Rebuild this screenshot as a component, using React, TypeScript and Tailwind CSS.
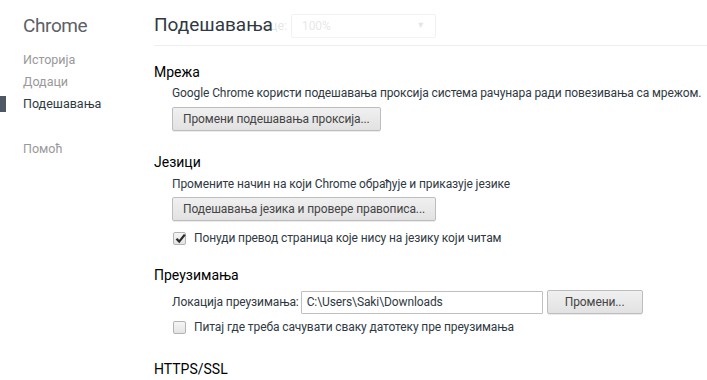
import React from 'react';

const font = { fontFamily: 'Roboto, "Noto Sans", sans-serif' };

const NavItem: React.FC<{ label: string; active?: boolean; className?: string }> = ({ label, active, className }) => (
  <div className={`relative h-[21px] flex items-center pl-[23px] ${className ?? ''}`}>
    {active && <div className="absolute left-0 top-[2px] w-[6px] h-[16px] bg-[#4e5764]" />}
    <span className={active ? 'text-[#303942]' : 'text-[#999999]'}>{label}</span>
  </div>
);

const Button: React.FC<{ label: string; className?: string }> = ({ label, className }) => (
  <button
    className={`h-[24px] px-[10px] rounded-[2px] border border-[#bdbdbd] bg-gradient-to-b from-[#f0f0f0] to-[#e2e2e2] text-[#444444] text-[12px] tracking-[-0.1px] leading-none shadow-[0_1px_0_rgba(0,0,0,0.08)] whitespace-nowrap ${className ?? ''}`}
  >
    {label}
  </button>
);

const Checkbox: React.FC<{ checked?: boolean; label: string }> = ({ checked, label }) => (
  <div className="flex items-center h-[18px]">
    <div className="relative w-[13px] h-[13px] ml-[1px] rounded-[2px] border border-[#b3b3b3] bg-gradient-to-b from-[#f5f5f5] to-[#e4e4e4]">
      {checked && (
        <svg viewBox="0 0 13 13" className="absolute left-[0px] top-[-1px] w-[13px] h-[13px]">
          <path d="M2.5 6.8 L5.2 9.6 L10.8 2.6" fill="none" stroke="#2b2b2b" strokeWidth="2.3" />
        </svg>
      )}
    </div>
    <span className="ml-[8px]">{label}</span>
  </div>
);

export default function App() {
  return (
    <div className="w-[707px] h-[380px] overflow-hidden bg-white flex text-[12px] tracking-[-0.1px] text-[#303942]" style={font}>
      {/* Sidebar */}
      <div className="w-[154px] shrink-0 pt-[12px] text-[12.5px] tracking-normal">
        <div className="pl-[23px] text-[19px] tracking-[-0.4px] text-[#5c6166] leading-[28px] mb-[10px]">Chrome</div>
        <NavItem label="Историја" />
        <NavItem label="Додаци" className="mt-[1px]" />
        <NavItem label="Подешавања" active className="mt-[1px]" />
        <NavItem label="Помоћ" className="mt-[24px]" />
      </div>

      {/* Content */}
      <div className="flex-1 min-w-0">
        {/* Header (faded settings scrolled under it) */}
        <div className="relative h-[46px] border-b border-[#eeeeee]">
          <div className="absolute left-[109px] top-[14px] flex items-center opacity-[0.12]">
            <span className="text-[12.5px] text-[#303942] w-[28px]">ице:</span>
            <div className="w-[145px] h-[24px] border border-[#999] rounded-[2px] flex items-center justify-between px-[10px]">
              <span>100%</span>
              <span className="text-[9px]">▼</span>
            </div>
          </div>
          <div className="relative pt-[11px] text-[19px] tracking-normal leading-[28px] text-[#303942]">Подешавања</div>
        </div>

        {/* Мрежа */}
        <div className="pt-[16px]">
          <div className="text-[14px] tracking-normal leading-[20px] text-[#000000]">Мрежа</div>
          <div className="pl-[18px]">
            <div className="leading-[20px] mt-[1px] whitespace-nowrap">Google Chrome користи подешавања проксија система рачунара ради повезивања са мрежом.</div>
            <Button label="Промени подешавања проксија..." className="mt-[4px]" />
          </div>
        </div>

        {/* Језици */}
        <div className="pt-[21px]">
          <div className="text-[14px] tracking-normal leading-[20px] text-[#000000]">Језици</div>
          <div className="pl-[18px]">
            <div className="leading-[20px] mt-[2px]">Промените начин на који Chrome обрађује и приказује језике</div>
            <Button label="Подешавања језика и провере правописа..." className="mt-[3px]" />
            <div className="mt-[8px]">
              <Checkbox checked label="Понуди превод страница које нису на језику који читам" />
            </div>
          </div>
        </div>

        {/* Преузимања */}
        <div className="pt-[18px]">
          <div className="text-[14px] tracking-normal leading-[20px] text-[#000000]">Преузимања</div>
          <div className="pl-[18px]">
            <div className="flex items-center mt-[5px]">
              <span>Локација преузимања:</span>
              <div className="ml-[2px] w-[242px] h-[23px] border border-[#bfbfbf] rounded-[1px] flex items-center px-[5px]">
                C:\Users\Saki\Downloads
              </div>
              <Button label="Промени..." className="ml-[4px] w-[96px]" />
            </div>
            <div className="mt-[4px]">
              <Checkbox label="Питај где треба сачувати сваку датотеку пре преузимања" />
            </div>
          </div>
        </div>

        {/* HTTPS/SSL */}
        <div className="pt-[23px]">
          <div className="text-[14px] tracking-normal leading-[20px] text-[#000000]">HTTPS/SSL</div>
        </div>
      </div>
    </div>
  );
}
